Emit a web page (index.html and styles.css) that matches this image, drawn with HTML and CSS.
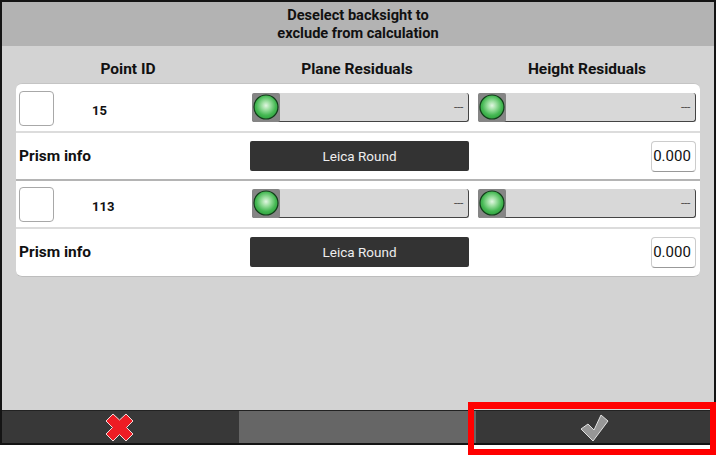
FILE: index.html
```html
<!DOCTYPE html>
<html lang="en">
<head>
    <meta charset="UTF-8">
    <title>Backsight selection</title>
    <link rel="stylesheet" href="styles.css">
</head>
<body>
    <svg class="defs" width="0" height="0">
        <defs>
            <radialGradient id="led" cx="50%" cy="44%" r="58%">
                <stop offset="0" stop-color="#e2f6e3"/>
                <stop offset="0.3" stop-color="#9fe0a3"/>
                <stop offset="0.7" stop-color="#45b853"/>
                <stop offset="1" stop-color="#2c9f3c"/>
            </radialGradient>
        </defs>
    </svg>
    <div class="frame">
        <div class="title">Deselect backsight to<br>exclude from calculation</div>
        <div class="content">
            <div class="heads">
                <div>Point ID</div>
                <div>Plane Residuals</div>
                <div>Height Residuals</div>
            </div>
            <div class="card">
                <div class="row">
                    <div class="check"></div>
                    <div class="point">15</div>
                    <div class="slider">
                        <div class="knob"><svg width="26" height="26" viewBox="0 0 26 26"><circle cx="13" cy="13" r="12" fill="url(#led)" stroke="#123d1a" stroke-width="1.2"/></svg></div>
                        <span>---</span>
                    </div>
                    <div class="slider">
                        <div class="knob"><svg width="26" height="26" viewBox="0 0 26 26"><circle cx="13" cy="13" r="12" fill="url(#led)" stroke="#123d1a" stroke-width="1.2"/></svg></div>
                        <span>---</span>
                    </div>
                </div>
                <div class="row sep-thin">
                    <div class="prism-label">Prism info</div>
                    <div class="prism-btn">Leica Round</div>
                    <div class="value">0.000</div>
                </div>
                <div class="row sep-thick">
                    <div class="check"></div>
                    <div class="point">113</div>
                    <div class="slider">
                        <div class="knob"><svg width="26" height="26" viewBox="0 0 26 26"><circle cx="13" cy="13" r="12" fill="url(#led)" stroke="#123d1a" stroke-width="1.2"/></svg></div>
                        <span>---</span>
                    </div>
                    <div class="slider">
                        <div class="knob"><svg width="26" height="26" viewBox="0 0 26 26"><circle cx="13" cy="13" r="12" fill="url(#led)" stroke="#123d1a" stroke-width="1.2"/></svg></div>
                        <span>---</span>
                    </div>
                </div>
                <div class="row sep-thin">
                    <div class="prism-label">Prism info</div>
                    <div class="prism-btn">Leica Round</div>
                    <div class="value">0.000</div>
                </div>
            </div>
        </div>
        <div class="footer">
            <div class="foot-btn">
                <svg width="29" height="29" viewBox="-1 -1 29 29"><polygon points="7,0 13.5,6 20,0 27,7 20.5,13.5 27,20 20,27 13.5,20.5 7,27 0,20 6.5,13.5 0,7" fill="#ed1c24" stroke="#f3dcdc" stroke-width="1" stroke-linejoin="round"/></svg>
            </div>
            <div class="foot-mid"></div>
            <div class="foot-btn">
                <svg width="29" height="29" viewBox="-1 -1 29 29"><polygon points="0,15 7,10 13,16 20,1 27,7 12,27" fill="#979797" stroke="#e2e2e2" stroke-width="1" stroke-linejoin="round"/></svg>
            </div>
        </div>
    </div>
    <div class="highlight"></div>
</body>
</html>
```

FILE: styles.css
```css
body {
    margin: 0;
    background-color: #fff;
    font-family: Roboto, "Liberation Sans", sans-serif;
    color: #111;
}
.defs {
    position: absolute;
}
.frame {
    width: 716px;
    height: 445px;
    box-sizing: border-box;
    border: 2px solid #141414;
    background-color: #d3d3d3;
    display: flex;
    flex-direction: column;
}
.title {
    height: 44px;
    background-color: #b3b3b3;
    display: flex;
    align-items: center;
    justify-content: center;
    text-align: center;
    font-size: 14.6px;
    line-height: 18px;
    font-weight: 700;
}
.content {
    flex: 1;
    padding: 0 14px;
}
.heads {
    height: 37px;
    box-sizing: border-box;
    padding-top: 9px;
    display: grid;
    grid-template-columns: 224px 234px 1fr;
    align-items: center;
    font-size: 15.5px;
    font-weight: 700;
    text-align: center;
}
.card {
    background-color: #fff;
    border-radius: 6px;
    border-top: 1px solid #c4c4c4;
    border-bottom: 1px solid #bdbdbd;
}
.row {
    height: 48px;
    box-sizing: border-box;
    padding: 0 4px 0 3px;
    display: flex;
    align-items: center;
}
.sep-thin {
    box-shadow: 0 -1px 0 #dcdcdc, inset 0 1px 0 #dcdcdc;
}
.sep-thick {
    box-shadow: 0 -1px 0 #b4b4b4, inset 0 1px 0 #b4b4b4;
}
.check {
    width: 35px;
    height: 35px;
    box-sizing: border-box;
    border: 1px solid #a8a8a8;
    border-radius: 4px;
}
.point {
    width: 198px;
    box-sizing: border-box;
    padding: 5px 0 0 38px;
    font-size: 13px;
    font-weight: 700;
}
.slider {
    width: 217px;
    height: 29px;
    box-sizing: border-box;
    background-color: #d8d8d8;
    border-right: 1px solid #444;
    border-bottom: 1px solid #444;
    border-radius: 3px;
    display: flex;
    align-items: center;
    justify-content: space-between;
    margin: 0 9px 1px 0;
}
.slider:last-child {
    width: 218px;
    margin-right: 0;
}
.slider span {
    font-size: 12px;
    letter-spacing: -0.3px;
    color: #555;
    padding-right: 5px;
}
.knob {
    width: 28px;
    height: 29px;
    box-sizing: border-box;
    background-color: #858585;
    border-radius: 2px;
    display: flex;
    align-items: center;
    justify-content: center;
}
.prism-label {
    width: 231px;
    font-size: 15.5px;
    font-weight: 700;
}
.prism-btn {
    width: 219px;
    height: 30px;
    background-color: #333;
    color: #eee;
    border-radius: 2px;
    display: flex;
    align-items: center;
    justify-content: center;
    font-size: 13.5px;
}
.value {
    margin-left: auto;
    width: 45px;
    height: 31px;
    box-sizing: border-box;
    padding-right: 3px;
    border: 1px solid #ccc;
    border-bottom-color: #999;
    border-radius: 4px;
    display: flex;
    align-items: center;
    justify-content: center;
    font-size: 15px;
}
.footer {
    height: 33px;
    box-sizing: border-box;
    border-top: 1px solid #222;
    display: grid;
    grid-template-columns: 237px 237px 1fr;
}
.foot-btn {
    background-color: #383838;
    display: flex;
    align-items: center;
    justify-content: center;
}
.foot-btn svg {
    margin-right: 2px;
}
.foot-mid {
    background-color: #666;
}
.highlight {
    position: absolute;
    left: 468px;
    top: 402px;
    width: 248px;
    height: 53px;
    box-sizing: border-box;
    border: 6px solid #f00;
    border-top-width: 7px;
}
```
